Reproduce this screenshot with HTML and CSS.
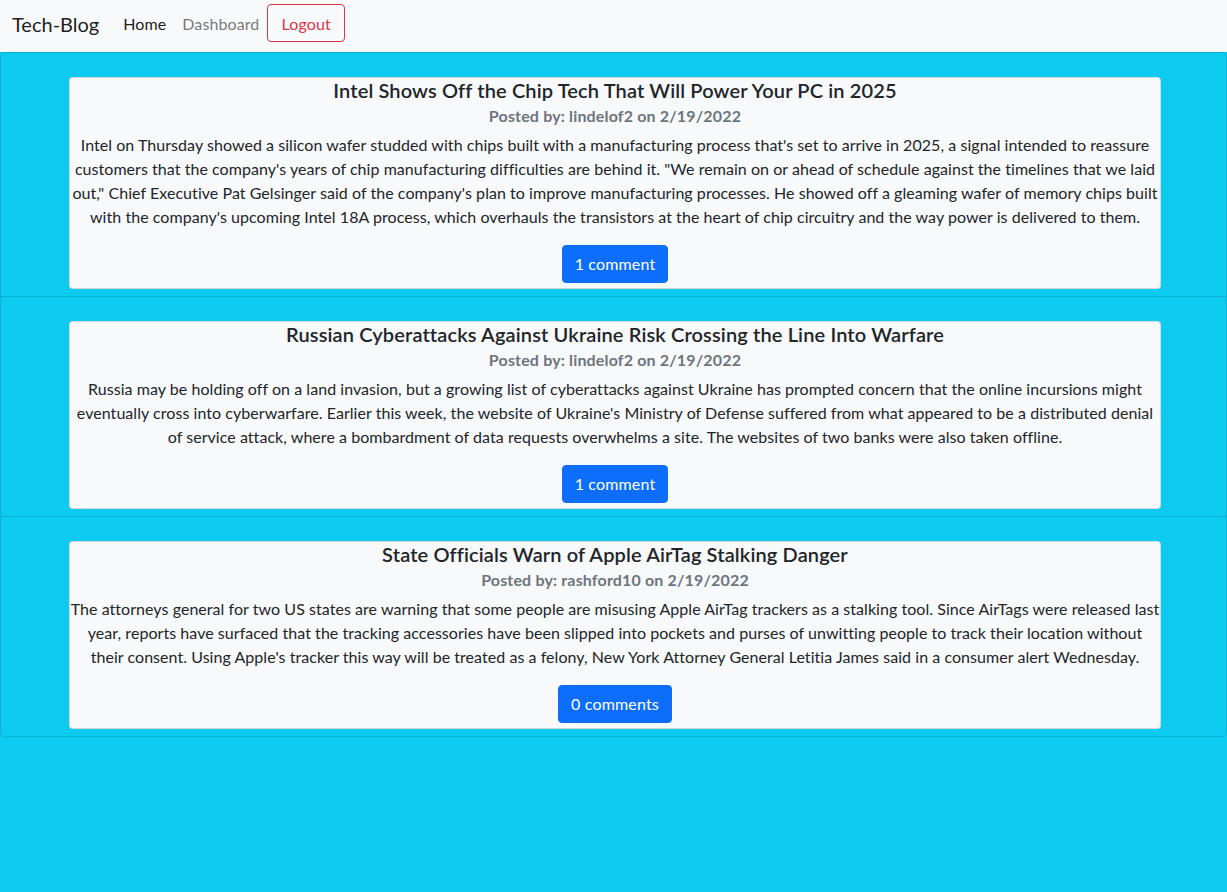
FILE: index.html
```html
<!DOCTYPE html>
<html lang="en">
<head>
<meta charset="utf-8">
<title>Tech-Blog</title>
<link rel="stylesheet" href="styles.css">
</head>
<body>
<nav class="navbar">
  <a class="brand" href="#">Tech-Blog</a>
  <a class="nav-link active" href="#">Home</a>
  <a class="nav-link" href="#">Dashboard</a>
  <button class="btn btn-logout">Logout</button>
</nav>
<main class="posts">
  <section class="post">
    <article class="card">
      <h5 class="card-title">Intel Shows Off the Chip Tech That Will Power Your PC in 2025</h5>
      <h6 class="card-subtitle">Posted by: lindelof2 on 2/19/2022</h6>
      <p class="card-text">Intel on Thursday showed a silicon wafer studded with chips built with a manufacturing process that's set to arrive in 2025, a signal intended to reassure customers that the company's years of chip manufacturing difficulties are behind it. "We remain on or ahead of schedule against the timelines that we laid out," Chief Executive Pat Gelsinger said of the company's plan to improve manufacturing processes. He showed off a gleaming wafer of memory chips built with the company's upcoming Intel 18A process, which overhauls the transistors at the heart of chip circuitry and the way power is delivered to them.</p>
      <button class="btn btn-primary">1 comment</button>
    </article>
  </section>
  <section class="post">
    <article class="card">
      <h5 class="card-title">Russian Cyberattacks Against Ukraine Risk Crossing the Line Into Warfare</h5>
      <h6 class="card-subtitle">Posted by: lindelof2 on 2/19/2022</h6>
      <p class="card-text">Russia may be holding off on a land invasion, but a growing list of cyberattacks against Ukraine has prompted concern that the online incursions might eventually cross into cyberwarfare. Earlier this week, the website of Ukraine's Ministry of Defense suffered from what appeared to be a distributed denial of service attack, where a bombardment of data requests overwhelms a site. The websites of two banks were also taken offline.</p>
      <button class="btn btn-primary">1 comment</button>
    </article>
  </section>
  <section class="post">
    <article class="card">
      <h5 class="card-title">State Officials Warn of Apple AirTag Stalking Danger</h5>
      <h6 class="card-subtitle">Posted by: rashford10 on 2/19/2022</h6>
      <p class="card-text">The attorneys general for two US states are warning that some people are misusing Apple AirTag trackers as a stalking tool. Since AirTags were released last year, reports have surfaced that the tracking accessories have been slipped into pockets and purses of unwitting people to track their location without their consent. Using Apple's tracker this way will be treated as a felony, New York Attorney General Letitia James said in a consumer alert Wednesday.</p>
      <button class="btn btn-primary">0 comments</button>
    </article>
  </section>
</main>
</body>
</html>
```
FILE: styles.css
```css
* { box-sizing: border-box; }
html, body { height: 100%; }
body {
  margin: 0;
  background: #0dcaf0;
  font-family: "Segoe UI", Lato, "Noto Sans", sans-serif;
  font-size: 16px;
  line-height: 1.5;
  color: #212529;
  letter-spacing: 0.05px;
}
.navbar {
  display: flex;
  align-items: center;
  height: 52px;
  padding: 0 12px 6px;
  background: #f8f9fa;
}
.brand {
  font-size: 20px;
  color: rgba(0,0,0,.9);
  text-decoration: none;
  margin-right: 16px;
  line-height: 30px;
  padding-top: 2px;
  letter-spacing: 0;
}
.nav-link {
  padding: 10px 8px 8px;
  color: rgba(0,0,0,.55);
  text-decoration: none;
  letter-spacing: 0.1px;
}
.nav-link.active { color: rgba(0,0,0,.9); }
.btn {
  font-family: inherit;
  font-size: 16px;
  line-height: 24px;
  letter-spacing: 0.16px;
  padding: 6px 12px;
  border-radius: 4px;
  border: 1px solid transparent;
  cursor: pointer;
}
.btn-logout {
  padding: 7px 13px 5px;
  color: #dc3545;
  background: transparent;
  border-color: #dc3545;
}
.btn-primary {
  color: #fff;
  background: #0d6efd;
  border-color: #0d6efd;
}
.posts {
  display: flex;
  flex-direction: column;
}
.post {
  border: 1px solid rgba(0,0,0,.125);
  padding: 24px 65px 7px 68px;
}
.post + .post {
  border-top-width: 0;
}
.post:first-child { border-radius: 5px 5px 0 0; }
.post:last-child { border-radius: 0 0 5px 5px; }
.card {
  display: flex;
  flex-direction: column;
  align-items: center;
  text-align: center;
  background: #f8f9fa;
  border: 1px solid rgba(0,0,0,.125);
  border-radius: 4px;
  padding: 0 0 5px;
}
.card-title {
  margin: 0 0 4px;
  font-size: 20px;
  font-weight: 600;
  line-height: 24px;
  letter-spacing: 0.13px;
}
.card-subtitle {
  margin: 0 0 8px;
  font-size: 16px;
  font-weight: 700;
  line-height: 19px;
  color: #6c757d;
  letter-spacing: 0.16px;
}
.card-text {
  margin: 0 0 16px;
}
```
